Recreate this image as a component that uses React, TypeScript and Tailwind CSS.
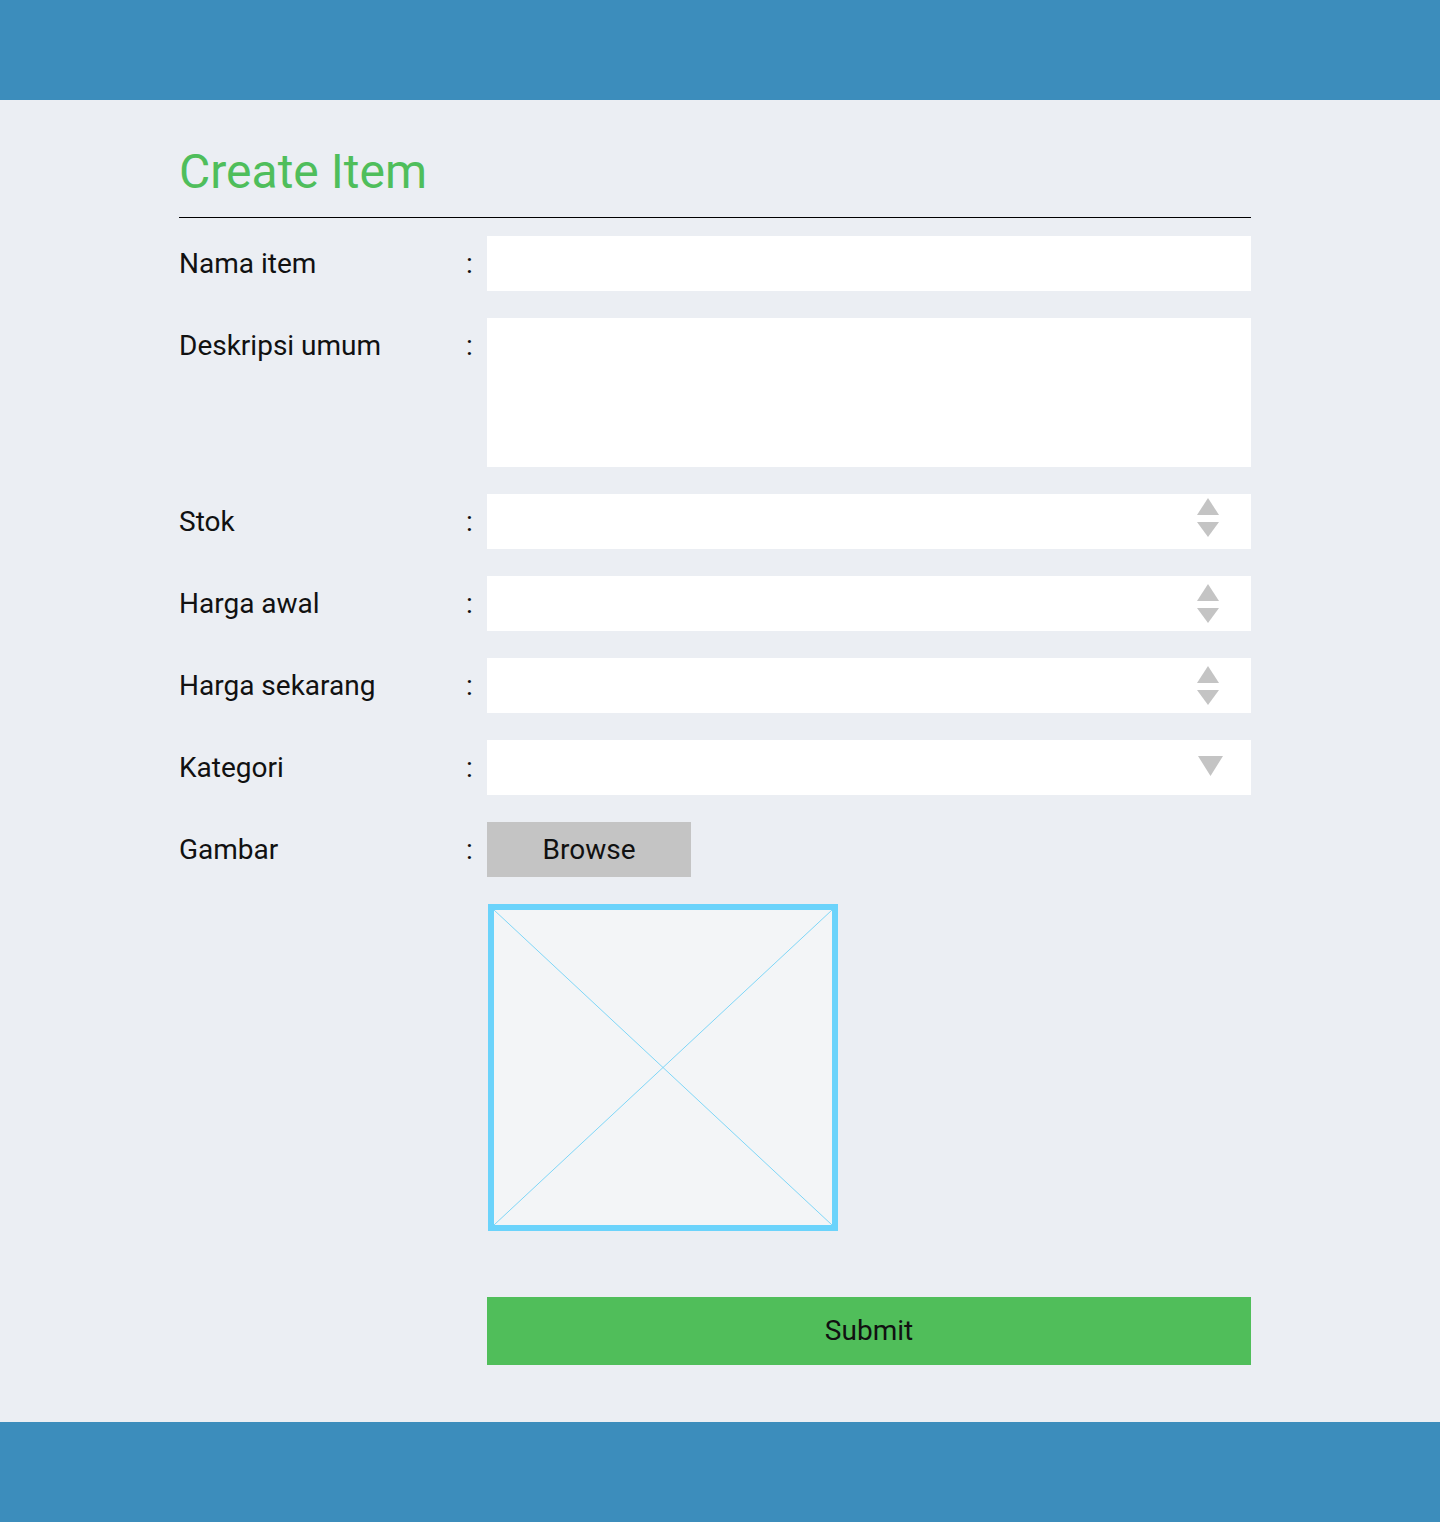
const font = { fontFamily: 'Roboto, "Noto Sans", sans-serif' };

function Spinner({ first = false }: { first?: boolean }) {
  return (
    <div className={`absolute right-[32px] ${first ? 'top-[4px]' : 'top-[8px]'} flex flex-col gap-[7px]`}>
      <svg width="22" height="17" viewBox="0 0 22 17"><polygon points="11,0 22,17 0,17" fill="#c4c4c4" /></svg>
      <svg width="22" height="15" viewBox="0 0 22 15"><polygon points="0,0 22,0 11,15" fill="#c4c4c4" /></svg>
    </div>
  );
}

function Row({ label, children, top = false }: { label: string; children: React.ReactNode; top?: boolean }) {
  return (
    <div className={`flex ${top ? 'items-start' : 'items-center'}`}>
      <div className={`w-[287px] text-[28px] text-[#111] ${top ? 'leading-[55px]' : ''}`}>{label}</div>
      <div className={`w-[21px] text-[28px] text-[#111] ${top ? 'leading-[55px]' : ''}`}>:</div>
      <div className="flex-1">{children}</div>
    </div>
  );
}

export default function App() {
  return (
    <div className="min-h-[1522px] flex flex-col bg-[#ebeef3]" style={font}>
      <div className="h-[100px] bg-[#3c8dbc]" />
      <div className="flex-1 w-[1072px] ml-[179px] pt-[40px] pb-[57px]">
        <h1 className="text-[48px] leading-[64px] text-[#4fbe5b]">Create Item</h1>
        <div className="mt-[13px] h-px bg-black" />
        <div className="mt-[18px] flex flex-col gap-[27px]">
          <Row label="Nama item">
            <div className="h-[55px] bg-white" />
          </Row>
          <Row label="Deskripsi umum" top>
            <div className="h-[149px] bg-white" />
          </Row>
          {['Stok', 'Harga awal', 'Harga sekarang'].map((l, i) => (
            <Row key={l} label={l}>
              <div className="h-[55px] bg-white relative">
                <Spinner first={i === 0} />
              </div>
            </Row>
          ))}
          <Row label="Kategori">
            <div className="h-[55px] bg-white relative">
              <svg className="absolute right-[28px] top-[16px]" width="25" height="20" viewBox="0 0 25 20">
                <polygon points="0,0 25,0 12.5,20" fill="#c4c4c4" />
              </svg>
            </div>
          </Row>
          <Row label="Gambar">
            <div className="w-[204px] h-[55px] bg-[#c4c4c4] flex items-center justify-center text-[28px] text-[#111]">
              Browse
            </div>
          </Row>
          <div className="flex">
            <div className="w-[309px]" />
            <div className="w-[350px] h-[327px] border-[6px] border-[#6bd3fb] bg-[#f3f5f7] relative">
              <svg className="absolute inset-0 w-full h-full" viewBox="0 0 338 315" preserveAspectRatio="none">
                <line x1="0" y1="0" x2="338" y2="315" stroke="#7fd6f7" strokeWidth="1" />
                <line x1="338" y1="0" x2="0" y2="315" stroke="#7fd6f7" strokeWidth="1" />
              </svg>
            </div>
          </div>
        </div>
        <div className="mt-[66px] ml-[308px] h-[68px] bg-[#50be5a] flex items-center justify-center text-[28px] text-[#111]">
          Submit
        </div>
      </div>
      <div className="h-[100px] bg-[#3c8dbc]" />
    </div>
  );
}
